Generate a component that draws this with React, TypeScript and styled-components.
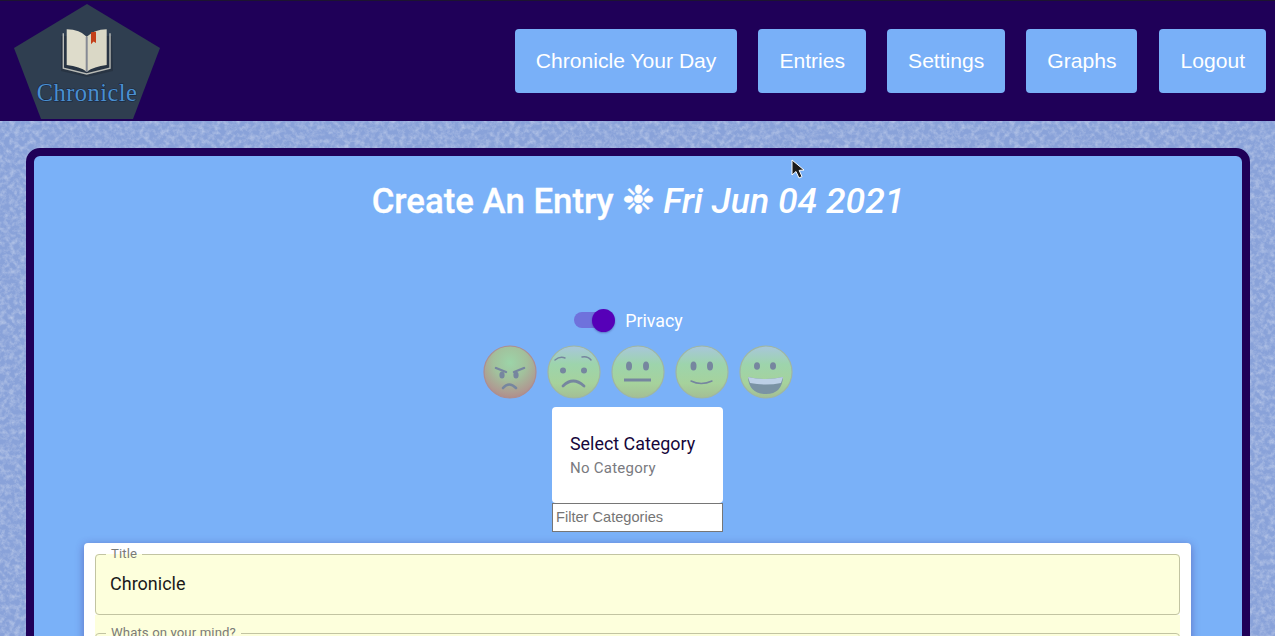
import React from "react";
import styled, { createGlobalStyle } from "styled-components";

const noise = `data:image/svg+xml,${encodeURIComponent(
  `<svg xmlns='http://www.w3.org/2000/svg' width='500' height='500'><filter id='n' x='0' y='0' width='100%' height='100%'><feTurbulence type='fractalNoise' baseFrequency='0.2' numOctaves='4' seed='7' stitchTiles='stitch'/><feColorMatrix values='0 0 0 0 1  0 0 0 0 1  0 0 0 0 1  0.7 0 0 0 -0.27'/></filter><rect width='500' height='500' filter='url(#n)'/></svg>`
)}`;

const Global = createGlobalStyle`
  html, body { margin: 0; height: 100%; overflow: hidden; }
  body {
    background-color: #89a2d9;
    background-image: url("${noise}");
    font-family: Roboto, "Liberation Sans", sans-serif;
  }
  * { box-sizing: border-box; }
`;

const Page = styled.div`
  position: relative;
  height: 636px;
  overflow: hidden;
`;

const Nav = styled.nav`
  height: 121px;
  background: #1f0058;
  border-top: 1px solid #1c1430;
  display: flex;
  align-items: flex-start;
  padding: 3px 9px 0 14px;
`;

const Logo = styled.svg`
  width: 146px;
  height: 115px;
  flex: none;
`;

const NavLinks = styled.div`
  margin-left: auto;
  margin-top: 25px;
  display: flex;
  gap: 21px;
`;

const NavButton = styled.button<{ $gapBefore?: number }>`
  height: 64px;
  padding: 0 21px;
  margin-left: ${(p) => p.$gapBefore ?? 0}px;
  border: 0;
  border-radius: 4px;
  background: #79b0f8;
  color: #fff;
  font: 400 21.1px "Liberation Sans", Arial, sans-serif;
`;

const Main = styled.main`
  padding: 27px 25px 0 26px;
`;

const Panel = styled.section`
  border: 8px solid #1f0058;
  border-radius: 14px;
  background: #7ab1f8;
  display: flex;
  flex-direction: column;
  align-items: center;
  & > * { flex: none; }
`;

const Heading = styled.h1`
  margin: 22px 0 0;
  height: 46px;
  font: 500 34.8px/46px Roboto, sans-serif;
  color: #fff;
  white-space: pre;
  -webkit-text-stroke: 0.3px #fff;
`;

const Clover = styled.span`
  font-family: "DejaVu Sans", sans-serif;
  font-size: 38.6px;
  line-height: 1;
  font-weight: 400;
`;

const DateText = styled.em`
  font-style: italic;
  font-size: 35.6px;
  -webkit-text-stroke: 0;
`;

const PrivacyRow = styled.label`
  margin: 84px 19px 0 0;
  height: 24px;
  display: flex;
  align-items: center;
  gap: 10px;
  color: #fff;
  font-size: 17.8px;
`;

const SwitchTrack = styled.span`
  position: relative;
  display: block;
  width: 34px;
  height: 16px;
  border-radius: 8px;
  background: #6f72dc;
  margin-right: 7px;
`;

const SwitchThumb = styled.span`
  position: absolute;
  left: 18px;
  top: -3px;
  width: 23px;
  height: 23px;
  border-radius: 50%;
  background: #5600b8;
  box-shadow: 0 1px 2px rgba(30, 0, 90, 0.35);
`;

const Moods = styled.div`
  margin-top: 13px;
  display: flex;
  gap: 10px;
`;

const MoodIcon = styled.svg`
  width: 54px;
  height: 54px;
  display: block;
`;

const CategoryCard = styled.div`
  margin: 8px 0 0 -1px;
  width: 171px;
  height: 96px;
  background: #fff;
  border-radius: 4px;
  padding: 26px 18px 0;
`;

const CategoryTitle = styled.div`
  font-size: 17.9px;
  line-height: 22px;
  color: #16063a;
`;

const CategoryValue = styled.div`
  margin-top: 3px;
  font-size: 15px;
  line-height: 20px;
  letter-spacing: 0.25px;
  color: #7a7a80;
`;

const FilterInput = styled.input`
  width: 171px;
  height: 29px;
  margin-left: -1px;
  border: 1px solid #767676;
  padding: 0 3px 2px;
  background: #fff;
  font: 400 14.6px "Liberation Sans", Arial, sans-serif;
  &::placeholder { color: #757575; opacity: 1; }
`;

const FormCard = styled.form`
  margin: 11px 0 0 -1px;
  width: 1107px;
  background: #fff;
  border-radius: 4px;
  padding: 4px 11px 0;
  box-shadow: 0 2px 8px rgba(60, 30, 130, 0.45);
`;

const Field = styled.fieldset<{ $height: number }>`
  margin: 0;
  padding: 0 14px;
  height: ${(p) => p.$height}px;
  background: #fdffdc;
  border: 1px solid #c2c4a2;
  border-radius: 4px;
`;

const FieldLegend = styled.legend`
  margin-left: -4px;
  padding: 0 5px;
  font-size: 13.2px;
  line-height: 14px;
  letter-spacing: 0.1px;
  color: #7b7b78;
`;

const FieldInput = styled.input`
  display: block;
  width: 100%;
  height: 44px;
  margin-top: 0;
  padding: 0;
  border: 0;
  outline: 0;
  background: transparent;
  color: #1a1a1a;
  font: 400 18px Roboto, sans-serif;
`;

const FieldGap = styled.div`
  background: #fdffdc;
  padding-top: 11px;
`;

const Cursor = styled.svg`
  position: absolute;
  left: 790px;
  top: 158px;
  width: 16px;
  height: 22px;
`;

type Mood = "angry" | "sad" | "neutral" | "smile" | "grin";
const ink = "#76869f";

const features: Record<Mood, React.ReactNode> = {
  angry: (
    <g fill="none" stroke={ink} strokeLinecap="round">
      <path d="M13 23 L23 27 M41 23 L31 27" strokeWidth="2.4" />
      <ellipse cx="19" cy="30" rx="2.6" ry="3.6" fill={ink} stroke="none" />
      <ellipse cx="33" cy="30" rx="2.6" ry="3.6" fill={ink} stroke="none" />
      <path d="M20 43 Q26 36 33 43" strokeWidth="2.6" />
    </g>
  ),
  sad: (
    <g fill="none" stroke={ink} strokeLinecap="round">
      <path d="M8 15 Q13 11 18 13 M35 12 Q41 11 44 15" strokeWidth="1.5" />
      <circle cx="16" cy="25.5" r="3" fill={ink} stroke="none" />
      <circle cx="37" cy="25.5" r="3" fill={ink} stroke="none" />
      <path d="M16 41 Q26 31 37 41" strokeWidth="2.8" />
    </g>
  ),
  neutral: (
    <g fill="none" stroke={ink}>
      <ellipse cx="18" cy="21" rx="3" ry="4.6" fill={ink} stroke="none" />
      <ellipse cx="35" cy="21" rx="3" ry="4.6" fill={ink} stroke="none" />
      <path d="M13 35 H40" strokeWidth="3" />
    </g>
  ),
  smile: (
    <g fill="none" stroke={ink}>
      <ellipse cx="18.5" cy="21" rx="3" ry="4.6" fill={ink} stroke="none" />
      <ellipse cx="35" cy="21" rx="3" ry="4.6" fill={ink} stroke="none" />
      <path d="M16 36 Q26 41 37 36" strokeWidth="1.4" strokeLinecap="round" />
    </g>
  ),
  grin: (
    <g>
      <ellipse cx="18" cy="21" rx="3" ry="3.8" fill={ink} />
      <ellipse cx="34" cy="21" rx="3" ry="3.8" fill={ink} />
      <path d="M9 32 Q27 36 44 32 Q43 49 27 49 Q10 49 9 32Z" fill="#7a93a4" />
      <path d="M9 32 Q27 36 44 32 L42 38 Q27 41 11 38Z" fill="#bcd0e6" />
    </g>
  ),
};

const MoodFace = ({ mood, id }: { mood: Mood; id: string }) => (
  <MoodIcon viewBox="0 0 54 54" aria-label={mood}>
    <defs>
      {mood === "angry" ? (
        <radialGradient id={id} cx="0.5" cy="0.32" r="0.72">
          <stop offset="0" stopColor="#9cd4a8" />
          <stop offset="0.45" stopColor="#a2c09c" />
          <stop offset="0.8" stopColor="#ae9c92" />
          <stop offset="1" stopColor="#b08888" />
        </radialGradient>
      ) : (
        <linearGradient id={id} x1="0" y1="0" x2="0" y2="1">
          <stop offset="0" stopColor="#a8c6dc" />
          <stop offset="0.35" stopColor="#9dd4ac" />
          <stop offset="0.72" stopColor="#a6d29c" />
          <stop offset="1" stopColor="#a4be94" />
        </linearGradient>
      )}
    </defs>
    <circle cx="27" cy="27" r="26" fill={`url(#${id})`} stroke={mood === "angry" ? "#ad8d90" : "#9fb6a2"} strokeWidth="1.2" />
    {features[mood]}
  </MoodIcon>
);

const moods: Mood[] = ["angry", "sad", "neutral", "smile", "grin"];

const ChronicleLogo = () => (
  <Logo viewBox="0 0 146 115" aria-label="Chronicle logo">
    <polygon points="73,0 146,44 119,115 27,115 0,44" fill="#2f3e50" />
    <path d="M47 67 L47 32 L98 32 L99 67 L73 73 Z" fill="#283443" />
    <path d="M49.3 29.3 V64.3 L72.7 70 L96 64.3 V29.3" fill="none" stroke="#b9bbb6" strokeWidth="1.4" />
    <path d="M52.7 25.3 Q66 25.5 72.7 32.7 V67.7 Q66 62.5 52.7 61 Z" fill="#dedccb" />
    <path d="M92.7 25.3 Q80 25.5 72.7 32.7 V67.7 Q80 62.5 92.7 61 Z" fill="#dad8c6" />
    <path d="M72.7 32.7 V68" stroke="#858a94" strokeWidth="2" fill="none" />
    <path d="M77 28.3 L82 27.8 V39 L79.5 37.4 L77 40.3 Z" fill="#c4401a" />
    <text
      x="73"
      y="97"
      textAnchor="middle"
      fontFamily="'Liberation Serif', serif"
      fontSize="24.5"
      letterSpacing="0.45"
      fill="#4a8fd0"
      stroke="#16233a"
      strokeWidth="1"
      paintOrder="stroke"
    >
      Chronicle
    </text>
  </Logo>
);

export default function App() {
  return (
    <Page>
      <Global />
      <Nav>
        <ChronicleLogo />
        <NavLinks>
          <NavButton>Chronicle Your Day</NavButton>
          <NavButton>Entries</NavButton>
          <NavButton>Settings</NavButton>
          <NavButton>Graphs</NavButton>
          <NavButton $gapBefore={1}>Logout</NavButton>
        </NavLinks>
      </Nav>
      <Main>
        <Panel>
          <Heading>
            Create An Entry <Clover>❉</Clover> <DateText>Fri Jun 04 2021</DateText>
          </Heading>
          <PrivacyRow>
            <SwitchTrack>
              <SwitchThumb />
            </SwitchTrack>
            Privacy
          </PrivacyRow>
          <Moods>
            {moods.map((m) => (
              <MoodFace key={m} mood={m} id={`mood-${m}`} />
            ))}
          </Moods>
          <CategoryCard>
            <CategoryTitle>Select Category</CategoryTitle>
            <CategoryValue>No Category</CategoryValue>
          </CategoryCard>
          <FilterInput placeholder="Filter Categories" />
          <FormCard>
            <Field $height={68}>
              <FieldLegend>Title</FieldLegend>
              <FieldInput readOnly defaultValue="Chronicle" />
            </Field>
            <FieldGap>
              <Field $height={200}>
                <FieldLegend>Whats on your mind?</FieldLegend>
              </Field>
            </FieldGap>
          </FormCard>
        </Panel>
      </Main>
      <Cursor viewBox="0 0 16 22">
        <path d="M2 2 L2 17 L6 13.5 L9 20 L12 18.6 L9.2 12.4 L14 12 Z" fill="#1c1c1c" stroke="#fff" strokeWidth="1" />
      </Cursor>
    </Page>
  );
}
